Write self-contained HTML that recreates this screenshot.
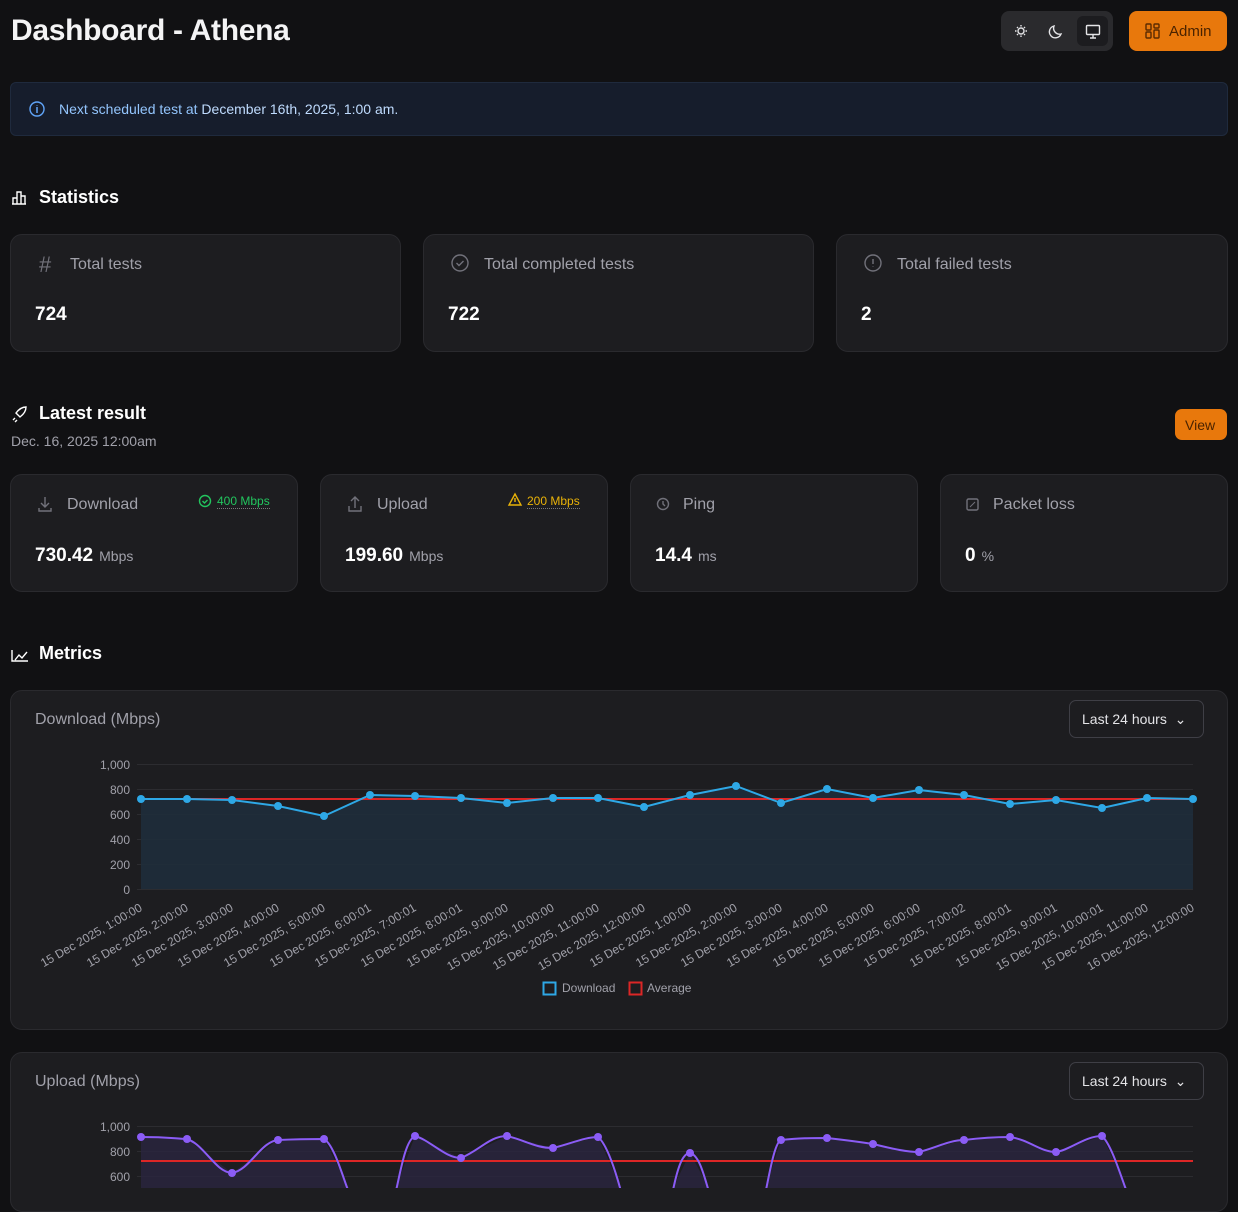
<!DOCTYPE html>
<html><head><meta charset="utf-8"><style>
*{box-sizing:border-box;margin:0;padding:0}
body{width:1238px;height:1188px;overflow:hidden;background:#111113;font-family:"Liberation Sans",sans-serif;color:#f4f4f5;position:relative}
.abs{position:absolute}
.card{position:absolute;background:#1d1d20;border:1px solid #2a2a2e;border-radius:12px}
.lbl{color:#a1a1aa;font-size:16px}
.big{font-weight:bold;font-size:19px;color:#fff}
.unit{font-size:14px;color:#a1a1aa;font-weight:normal;margin-left:6px}
h2{position:absolute;font-size:18px;font-weight:bold;color:#fff}
svg{position:absolute;left:0;top:0}
</style></head><body>
<div class="abs" style="left:11px;top:14px;font-size:30px;font-weight:bold;letter-spacing:-0.3px">Dashboard - Athena</div>
<div class="abs" style="left:1001px;top:11px;width:112px;height:40px;background:#2a2a2d;border-radius:8px"></div>
<div class="abs" style="left:1077px;top:16px;width:31px;height:30px;background:#1c1c1f;border-radius:6px"></div>
<svg width="1238" height="60" style="z-index:2">
<g stroke="#e4e4e7" fill="none" stroke-width="1.4">
<circle cx="1021" cy="31" r="3"/><path d="M1021 25v1.5M1021 35.5v1.5M1015 31h1.5M1025.5 31h1.5M1017 27l1 1M1024 34l1 1M1017 35l1-1M1024 28l1-1"/>
<path d="M1061 34a6 6 0 0 1-7-8a6 6 0 1 0 7 8z"/>
<rect x="1086.5" y="25.5" width="13" height="9" rx="1"/><path d="M1090 38h6M1093 35v3"/>
<g stroke="#5a2a00"><rect x="1146" y="24" width="5" height="6" rx="1"/><rect x="1146" y="32" width="5" height="6" rx="1"/><rect x="1154" y="24" width="5" height="4" rx="1"/><rect x="1154" y="30" width="5" height="8" rx="1"/></g>
</g></svg>
<div class="abs" style="left:1129px;top:11px;width:98px;height:40px;background:#e8780c;border-radius:8px;color:#4a2300;font-size:15px;padding:12px 0 0 40px">Admin</div>

<div class="abs" style="left:10px;top:82px;width:1218px;height:54px;background:#161d2c;border:1px solid #1f2a3d;border-radius:6px"></div>
<svg width="60" height="140" style="z-index:2"><circle cx="37" cy="109" r="7" stroke="#60a5fa" stroke-width="1.4" fill="none"/><path d="M37 107v6M37 105v.5" stroke="#60a5fa" stroke-width="1.5"/></svg>
<div class="abs" style="left:59px;top:101px;font-size:14px;color:#93c5fd">Next scheduled test at <span style="color:#bfdbfe">December 16th, 2025, 1:00 am.</span></div>

<svg width="40" height="700" style="z-index:2"><g stroke="#fff" fill="none" stroke-width="1.4">
<path d="M13 204v-6h4v6M17 204v-12h4v12M21 204v-8h4v8M12 204h14"/>
<path d="M15 418l-2 2M17 420l-2 2M16 413c3-4 6-6 10-6c0 4-2 7-6 10l-4-4z"/>
<path d="M12 650v11h16M15 660l4-5 3 3 5-6"/></g></svg>
<h2 style="left:39px;top:187px">Statistics</h2>

<div class="card" style="left:10px;top:234px;width:391px;height:118px"></div>
<div class="card" style="left:423px;top:234px;width:391px;height:118px"></div>
<div class="card" style="left:836px;top:234px;width:392px;height:118px"></div>
<div class="abs lbl" style="left:39px;top:252px;font-size:22px;color:#71717a">#</div>
<div class="abs lbl" style="left:70px;top:256px">Total tests</div>
<div class="abs big" style="left:35px;top:304px">724</div>
<div class="abs lbl" style="left:484px;top:256px">Total completed tests</div>
<div class="abs big" style="left:448px;top:304px">722</div>
<div class="abs lbl" style="left:897px;top:256px">Total failed tests</div>
<div class="abs big" style="left:861px;top:304px">2</div>

<h2 style="left:39px;top:403px">Latest result</h2>
<div class="abs" style="left:11px;top:433px;font-size:14px;color:#a1a1aa">Dec. 16, 2025 12:00am</div>
<div class="abs" style="left:1175px;top:409px;width:52px;height:31px;background:#e8780c;border-radius:7px;color:#4a2300;font-size:14px;padding:8px 0 0 10px">View</div>

<div class="card" style="left:10px;top:474px;width:288px;height:118px"></div>
<div class="card" style="left:320px;top:474px;width:288px;height:118px"></div>
<div class="card" style="left:630px;top:474px;width:288px;height:118px"></div>
<div class="card" style="left:940px;top:474px;width:288px;height:118px"></div>
<div class="abs lbl" style="left:67px;top:496px">Download</div>
<div class="abs" style="left:217px;top:494px;font-size:12px;color:#22c55e;border-bottom:1px dotted #777">400 Mbps</div>
<div class="abs big" style="left:35px;top:545px">730.42<span class="unit">Mbps</span></div>
<div class="abs lbl" style="left:377px;top:496px">Upload</div>
<div class="abs" style="left:527px;top:494px;font-size:12px;color:#eab308;border-bottom:1px dotted #777">200 Mbps</div>
<div class="abs big" style="left:345px;top:545px">199.60<span class="unit">Mbps</span></div>
<div class="abs lbl" style="left:683px;top:496px">Ping</div>
<div class="abs big" style="left:655px;top:545px">14.4<span class="unit">ms</span></div>
<div class="abs lbl" style="left:993px;top:496px">Packet loss</div>
<div class="abs big" style="left:965px;top:545px">0<span class="unit">%</span></div>

<h2 style="left:39px;top:643px">Metrics</h2>
<div class="card" style="left:10px;top:690px;width:1218px;height:340px"></div>
<div class="card" style="left:10px;top:1052px;width:1218px;height:160px"></div>
<div class="abs lbl" style="left:35px;top:711px">Download (Mbps)</div>
<div class="abs lbl" style="left:35px;top:1073px">Upload (Mbps)</div>
<div class="abs" style="left:1069px;top:700px;width:135px;height:38px;border:1px solid #3f3f46;border-radius:7px;font-size:14px;padding:10px 0 0 12px;color:#e4e4e7">Last 24 hours &nbsp;⌄</div>
<div class="abs" style="left:1069px;top:1062px;width:135px;height:38px;border:1px solid #3f3f46;border-radius:7px;font-size:14px;padding:10px 0 0 12px;color:#e4e4e7">Last 24 hours &nbsp;⌄</div>

<svg width="1238" height="1188" style="z-index:3;font-family:'Liberation Sans',sans-serif">
<g fill="none" stroke-width="1.4">
<path d="M45 497v10M41 503l4 4 4-4M39 508v3h12v-3" stroke="#71717a"/>
<path d="M355 508v-11M351 501l4-4 4 4M349 506v5h12v-5" stroke="#71717a"/>
<circle cx="663" cy="504" r="5.5" stroke="#71717a"/><path d="M663 501v3l2 2" stroke="#71717a"/>
<rect x="967" y="499" width="11" height="11" rx="1.5" stroke="#71717a"/><path d="M970 507l5-5" stroke="#71717a" stroke-width="1"/>
<circle cx="205" cy="501" r="5.5" stroke="#22c55e"/><path d="M202.5 501l2 2 3-3" stroke="#22c55e"/>
<path d="M515 494l6 11h-12z M515 498v4" stroke="#eab308"/>
<circle cx="460" cy="263" r="8" stroke="#71717a"/><path d="M456.5 263l2.5 2.5 4.5-4.5" stroke="#71717a"/>
<circle cx="873" cy="263" r="8" stroke="#71717a"/><path d="M873 259v5M873 266.5v.5" stroke="#71717a"/>
</g>
<g stroke="#2c2c30" stroke-width="1"><path d="M137 764.5H1193M137 789.5H1193M137 814.5H1193M137 839.5H1193M137 864.5H1193M137 889.5H1193M137 1126.5H1193M137 1151.5H1193M137 1176.5H1193"/></g>
<g fill="#a1a1aa" font-size="12" text-anchor="end">
<text x="130" y="769">1,000</text><text x="130" y="794">800</text><text x="130" y="819">600</text><text x="130" y="844">400</text><text x="130" y="869">200</text><text x="130" y="894">0</text>
<text x="130" y="1131">1,000</text><text x="130" y="1156">800</text><text x="130" y="1181">600</text>
</g>
<polygon fill="#1f2d3b" opacity="0.9" points="141,889 141,799 187,799 232,800 278,806 324,816 370,795 415,796 461,798 507,803 553,798 598,798 644,807 690,795 736,786 781,803 827,789 873,798 919,790 964,795 1010,804 1056,800 1102,808 1147,798 1193,799 1193,889"/>
<line x1="141" y1="799" x2="1193" y2="799" stroke="#dc2626" stroke-width="2"/>
<polyline fill="none" stroke="#2ea8e6" stroke-width="2" points="141,799 187,799 232,800 278,806 324,816 370,795 415,796 461,798 507,803 553,798 598,798 644,807 690,795 736,786 781,803 827,789 873,798 919,790 964,795 1010,804 1056,800 1102,808 1147,798 1193,799"/>
<g fill="#2ea8e6"><circle cx="141" cy="799" r="4"/><circle cx="187" cy="799" r="4"/><circle cx="232" cy="800" r="4"/><circle cx="278" cy="806" r="4"/><circle cx="324" cy="816" r="4"/><circle cx="370" cy="795" r="4"/><circle cx="415" cy="796" r="4"/><circle cx="461" cy="798" r="4"/><circle cx="507" cy="803" r="4"/><circle cx="553" cy="798" r="4"/><circle cx="598" cy="798" r="4"/><circle cx="644" cy="807" r="4"/><circle cx="690" cy="795" r="4"/><circle cx="736" cy="786" r="4"/><circle cx="781" cy="803" r="4"/><circle cx="827" cy="789" r="4"/><circle cx="873" cy="798" r="4"/><circle cx="919" cy="790" r="4"/><circle cx="964" cy="795" r="4"/><circle cx="1010" cy="804" r="4"/><circle cx="1056" cy="800" r="4"/><circle cx="1102" cy="808" r="4"/><circle cx="1147" cy="798" r="4"/><circle cx="1193" cy="799" r="4"/></g>
<g fill="#a1a1aa" font-size="12" text-anchor="end">
<text transform="translate(143,910) rotate(-30)">15 Dec 2025, 1:00:00</text>
<text transform="translate(189,910) rotate(-30)">15 Dec 2025, 2:00:00</text>
<text transform="translate(234,910) rotate(-30)">15 Dec 2025, 3:00:00</text>
<text transform="translate(280,910) rotate(-30)">15 Dec 2025, 4:00:00</text>
<text transform="translate(326,910) rotate(-30)">15 Dec 2025, 5:00:00</text>
<text transform="translate(372,910) rotate(-30)">15 Dec 2025, 6:00:01</text>
<text transform="translate(417,910) rotate(-30)">15 Dec 2025, 7:00:01</text>
<text transform="translate(463,910) rotate(-30)">15 Dec 2025, 8:00:01</text>
<text transform="translate(509,910) rotate(-30)">15 Dec 2025, 9:00:00</text>
<text transform="translate(555,910) rotate(-30)">15 Dec 2025, 10:00:00</text>
<text transform="translate(600,910) rotate(-30)">15 Dec 2025, 11:00:00</text>
<text transform="translate(646,910) rotate(-30)">15 Dec 2025, 12:00:00</text>
<text transform="translate(692,910) rotate(-30)">15 Dec 2025, 1:00:00</text>
<text transform="translate(738,910) rotate(-30)">15 Dec 2025, 2:00:00</text>
<text transform="translate(783,910) rotate(-30)">15 Dec 2025, 3:00:00</text>
<text transform="translate(829,910) rotate(-30)">15 Dec 2025, 4:00:00</text>
<text transform="translate(875,910) rotate(-30)">15 Dec 2025, 5:00:00</text>
<text transform="translate(921,910) rotate(-30)">15 Dec 2025, 6:00:00</text>
<text transform="translate(966,910) rotate(-30)">15 Dec 2025, 7:00:02</text>
<text transform="translate(1012,910) rotate(-30)">15 Dec 2025, 8:00:01</text>
<text transform="translate(1058,910) rotate(-30)">15 Dec 2025, 9:00:01</text>
<text transform="translate(1104,910) rotate(-30)">15 Dec 2025, 10:00:01</text>
<text transform="translate(1149,910) rotate(-30)">15 Dec 2025, 11:00:00</text>
<text transform="translate(1195,910) rotate(-30)">16 Dec 2025, 12:00:00</text>
</g>
<rect x="543.5" y="982.5" width="12" height="12" fill="none" stroke="#2ea8e6" stroke-width="2"/>
<text x="562" y="992" fill="#a1a1aa" font-size="12">Download</text>
<rect x="629.5" y="982.5" width="12" height="12" fill="none" stroke="#dc2626" stroke-width="2"/>
<text x="647" y="992" fill="#a1a1aa" font-size="12">Average</text>
<polygon fill="#2a2540" opacity="0.8" points="141,1190 141,1137 187,1139 232,1173 278,1140 324,1139 350,1190 395,1190 415,1136 461,1158 507,1136 553,1148 598,1137 622,1190 672,1190 690,1153 710,1190 765,1190 781,1140 827,1138 873,1144 919,1152 964,1140 1010,1137 1056,1152 1102,1136 1128,1190"/>
<line x1="141" y1="1161" x2="1193" y2="1161" stroke="#dc2626" stroke-width="2"/>
<path fill="none" stroke="#8b5cf6" stroke-width="2" d="M141 1137C165 1137 170 1138 187 1139C205 1145 215 1172 232 1173C250 1170 260 1142 278 1140C300 1139 310 1139 324 1139C335 1145 345 1185 350 1195M395 1195C400 1175 405 1140 415 1136C430 1140 445 1158 461 1158C480 1150 490 1136 507 1136C525 1140 535 1148 553 1148C570 1144 585 1137 598 1137C608 1145 618 1180 622 1195M672 1195C677 1170 682 1153 690 1153C700 1155 705 1180 710 1195M765 1195C770 1170 775 1142 781 1140C800 1138 810 1138 827 1138C845 1140 860 1142 873 1144C890 1148 905 1152 919 1152C935 1148 950 1140 964 1140C980 1138 995 1137 1010 1137C1030 1140 1040 1152 1056 1152C1070 1150 1085 1136 1102 1136C1112 1145 1122 1180 1128 1195"/>
<g fill="#8b5cf6"><circle cx="141" cy="1137" r="4"/><circle cx="187" cy="1139" r="4"/><circle cx="232" cy="1173" r="4"/><circle cx="278" cy="1140" r="4"/><circle cx="324" cy="1139" r="4"/><circle cx="415" cy="1136" r="4"/><circle cx="461" cy="1158" r="4"/><circle cx="507" cy="1136" r="4"/><circle cx="553" cy="1148" r="4"/><circle cx="598" cy="1137" r="4"/><circle cx="690" cy="1153" r="4"/><circle cx="781" cy="1140" r="4"/><circle cx="827" cy="1138" r="4"/><circle cx="873" cy="1144" r="4"/><circle cx="919" cy="1152" r="4"/><circle cx="964" cy="1140" r="4"/><circle cx="1010" cy="1137" r="4"/><circle cx="1056" cy="1152" r="4"/><circle cx="1102" cy="1136" r="4"/></g>
</svg>
</body></html>
